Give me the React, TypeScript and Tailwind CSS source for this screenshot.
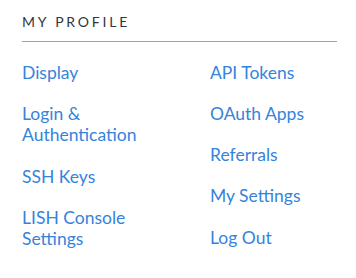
export default function App() {
  const left: string[] = ["Display", "Login & Authentication", "SSH Keys", "LISH Console Settings"];
  const right: string[] = ["API Tokens", "OAuth Apps", "Referrals", "My Settings", "Log Out"];

  return (
    <div className="w-[356px] h-[278px] bg-white pl-[22px] pr-[19px] pt-[14px] font-['Lato',sans-serif]">
      <h2 className="border-b border-[#9fa1a4] pb-[11px] text-[14px] leading-[16px] font-normal tracking-[0.2em] text-[#32363c] uppercase">
        My Profile
      </h2>
      <div className="grid grid-cols-[188px_1fr] pt-[19.5px]">
        <ul className="flex flex-col gap-[19.75px]">
          {left.map((item) => (
            <li key={item} className="max-w-[160px] text-[17.5px] leading-[21.5px]">
              <a href="#" className="text-[#3683dc]">
                {item}
              </a>
            </li>
          ))}
        </ul>
        <ul className="flex flex-col gap-[19.75px]">
          {right.map((item) => (
            <li key={item} className="text-[17.5px] leading-[21.5px]">
              <a href="#" className="text-[#3683dc]">
                {item}
              </a>
            </li>
          ))}
        </ul>
      </div>
    </div>
  );
}
